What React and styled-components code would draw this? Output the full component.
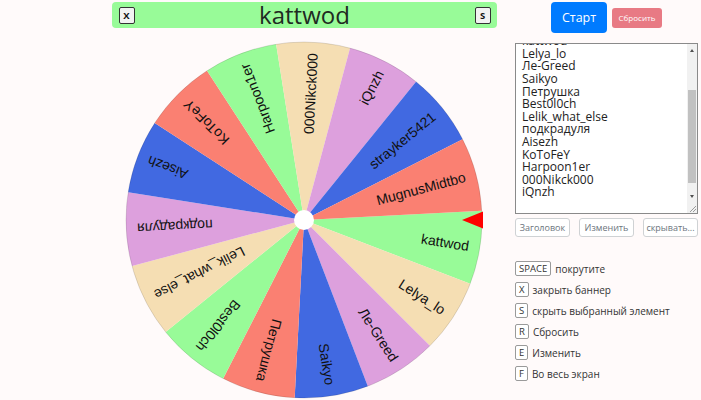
import React from 'react';
import styled, { createGlobalStyle } from 'styled-components';

const GlobalStyle = createGlobalStyle`
  html, body {
    margin: 0;
    background: #fffafa;
  }
  body {
    font-family: "Open Sans", "Noto Sans", sans-serif;
    color: #212529;
  }
`;

const names = [
  'kattwod', 'Lelya_lo', 'Ле-Greed', 'Saikyo', 'Петрушка',
  'Best0l0ch', 'Lelik_what_else', 'подкрадуля', 'Aisezh', 'KoToFeY',
  'Harpoon1er', '000Nikck000', 'iQnzh', 'strayker5421', 'MugnusMidtbo',
];

// textarea keeps the same order, starting two names earlier
const listed = [...names.slice(13), ...names.slice(0, 13)];

const colors = ['#98fb98', '#f5deb3', '#dda0dd', '#4169e1', '#fa8072'];

const shortcuts = [
  ['SPACE', 'покрутите'],
  ['X', 'закрыть баннер'],
  ['S', 'скрыть выбранный элемент'],
  ['R', 'Сбросить'],
  ['E', 'Изменить'],
  ['F', 'Во весь экран'],
];

const Page = styled.div`
  display: grid;
  grid-template-columns: 400px 183px;
  column-gap: 11px;
  padding-left: 104px;
  height: 400px;
  overflow: hidden;
`;

const WheelColumn = styled.div`
  display: flex;
  flex-direction: column;
  align-items: center;
`;

const Banner = styled.div`
  margin-top: 2px;
  width: 385px;
  height: 26px;
  box-sizing: border-box;
  padding: 0 6px 0 7px;
  background: #98fb98;
  border-radius: 4px;
  display: flex;
  align-items: center;
  justify-content: space-between;
`;

const BannerTitle = styled.span`
  font-size: 24px;
  line-height: 1.3;
  color: #1f2a22;
`;

const BannerKey = styled.kbd`
  width: 16px;
  height: 17px;
  box-sizing: border-box;
  border: 1px solid #333;
  border-radius: 2px;
  background: #f2f2f2;
  font-family: "Open Sans", sans-serif;
  font-weight: 700;
  font-size: 9.5px;
  display: flex;
  align-items: center;
  justify-content: center;
  color: #111;
`;

const WheelSvg = styled.svg`
  display: block;
  margin-top: 12px;
`;

const SideColumn = styled.div`
  display: flex;
  flex-direction: column;
`;

const Controls = styled.div`
  margin-top: 2px;
  height: 31px;
  display: flex;
  align-items: center;
  justify-content: center;
  gap: 5px;
`;

const StartButton = styled.button`
  width: 56px;
  height: 31px;
  border: none;
  border-radius: 4px;
  background: #007bff;
  color: #fff;
  font-family: inherit;
  font-size: 12.5px;
  padding: 0;
`;

const ResetButton = styled.button`
  width: 50px;
  height: 20px;
  border: none;
  border-radius: 3px;
  background: #e87a84;
  color: #fff;
  font-family: inherit;
  font-size: 8px;
  padding: 0;
`;

const ListBox = styled.div`
  margin-top: 10px;
  height: 171px;
  box-sizing: border-box;
  border: 1px solid #8a8a8a;
  background: #fff;
  display: flex;
`;

const ListText = styled.div`
  flex: 1;
  overflow: hidden;
  padding-left: 6px;
`;

const ListLines = styled.div`
  margin-top: ${p => -p.$scroll}px;
  font-size: 12px;
  line-height: 12.6px;
  color: #222;
  white-space: pre;
`;

const ScrollBar = styled.div`
  width: 10px;
  display: flex;
  flex-direction: column;
  background: #f1f1f1;
`;

const Arrow = styled.div`
  height: 12px;
  display: flex;
  align-items: center;
  justify-content: center;
  &::before {
    content: '';
    border-left: 2.5px solid transparent;
    border-right: 2.5px solid transparent;
    ${p => (p.$down ? 'border-top' : 'border-bottom')}: 3px solid #505050;
  }
`;

const Track = styled.div`
  flex: 1;
`;

const Thumb = styled.div`
  margin: ${p => p.$top}px 1px 0;
  height: ${p => p.$size}px;
  background: #c1c1c1;
`;

const Corner = styled.div`
  height: 11px;
  background: #f1f1f1;
  display: flex;
  align-items: flex-end;
  justify-content: flex-end;
`;

const ListActions = styled.div`
  margin-top: 4px;
  display: grid;
  grid-template-columns: repeat(3, 1fr);
  gap: 9px;
`;

const OutlineButton = styled.button`
  height: 19px;
  border: 1px solid #cfd2d4;
  border-radius: 3px;
  background: #fff;
  color: #6c757d;
  font-family: inherit;
  font-size: 9px;
  padding: 0;
`;

const Shortcuts = styled.div`
  margin-top: 24px;
  display: flex;
  flex-direction: column;
  gap: 6px;
`;

const ShortcutRow = styled.div`
  display: flex;
  align-items: center;
  gap: 4px;
  height: 15px;
`;

const Key = styled.kbd`
  height: 15px;
  min-width: 11px;
  box-sizing: border-box;
  padding: 0 3px;
  border: 1px solid #9a9a9a;
  border-radius: 2px;
  background: #fff;
  font-family: "Open Sans", sans-serif;
  font-size: 9.5px;
  color: #333;
  display: flex;
  align-items: center;
  justify-content: center;
`;

const ShortcutText = styled.span`
  font-size: 10px;
  color: #333;
`;

const C = 180;
const R = 178;
const STEP = 360 / names.length;
const START = -3;

const pt = (deg, r) => {
  const a = (deg * Math.PI) / 180;
  return [C + r * Math.cos(a), C + r * Math.sin(a)];
};

function Wheel() {
  return (
    <WheelSvg width="360" height="360" viewBox="0 0 360 360">
      {names.map((name, i) => {
        const a0 = START + i * STEP;
        const a1 = a0 + STEP;
        const [x0, y0] = pt(a0, R);
        const [x1, y1] = pt(a1, R);
        return (
          <path
            key={name}
            d={`M${C} ${C} L${x0} ${y0} A${R} ${R} 0 0 1 ${x1} ${y1} Z`}
            fill={colors[i % colors.length]}
          />
        );
      })}
      <circle cx={C} cy={C} r={R} fill="none" stroke="rgba(0,0,0,0.12)" strokeWidth="1" />
      {names.map((name, i) => (
        <text
          key={name}
          transform={`translate(${C} ${C}) rotate(${START + (i + 0.5) * STEP})`}
          x="167"
          y="0"
          textAnchor="end"
          dominantBaseline="central"
          fontFamily="'Liberation Sans', Arial, sans-serif"
          fontSize="14"
          fill="#111"
        >
          {name}
        </text>
      ))}
      <circle cx={C} cy={C} r="10" fill="#fff" />
      <polygon points="338,180 359,171.5 359,188.5" fill="#ff0000" />
    </WheelSvg>
  );
}

export default function App() {
  return (
    <>
      <GlobalStyle />
      <Page>
        <WheelColumn>
          <Banner>
            <BannerKey>X</BannerKey>
            <BannerTitle>kattwod</BannerTitle>
            <BannerKey>S</BannerKey>
          </Banner>
          <Wheel />
        </WheelColumn>

        <SideColumn>
          <Controls>
            <StartButton>Старт</StartButton>
            <ResetButton>Сбросить</ResetButton>
          </Controls>

          <ListBox>
            <ListText>
              <ListLines $scroll={34}>{listed.join('\n')}</ListLines>
            </ListText>
            <ScrollBar>
              <Arrow />
              <Track>
                <Thumb $top={34} $size={93} />
              </Track>
              <Arrow $down />
              <Corner>
                <svg width="9" height="9" viewBox="0 0 9 9">
                  <path d="M8 2 L2 8 M8 5 L5 8" stroke="#9a9a9a" strokeWidth="1" />
                </svg>
              </Corner>
            </ScrollBar>
          </ListBox>

          <ListActions>
            <OutlineButton>Заголовок</OutlineButton>
            <OutlineButton>Изменить</OutlineButton>
            <OutlineButton>скрывать...</OutlineButton>
          </ListActions>

          <Shortcuts>
            {shortcuts.map(([key, label]) => (
              <ShortcutRow key={key}>
                <Key>{key}</Key>
                <ShortcutText>{label}</ShortcutText>
              </ShortcutRow>
            ))}
          </Shortcuts>
        </SideColumn>
      </Page>
    </>
  );
}
